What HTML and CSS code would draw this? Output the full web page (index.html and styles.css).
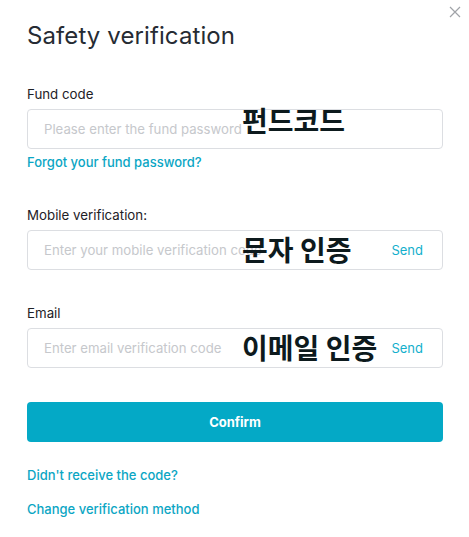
FILE: index.html
```html
<!DOCTYPE html>
<html lang="en">
<head>
<meta charset="utf-8">
<title>Safety verification</title>
<link rel="stylesheet" href="styles.css">
</head>
<body>
<div class="modal">
  <button class="close" aria-label="Close">
    <svg width="12" height="12" viewBox="0 0 12 12"><path d="M1 1L11 11M11 1L1 11" stroke="#a0a3a8" stroke-width="1.2" fill="none"/></svg>
  </button>
  <h1 class="title">Safety verification</h1>

  <div class="label first">Fund code</div>
  <div class="field">
    <input class="input" type="password" placeholder="Please enter the fund password">
    <span class="note note-fund">펀드코드</span>
  </div>
  <a class="link forgot" href="#">Forgot your fund password?</a>

  <div class="label">Mobile verification:</div>
  <div class="field">
    <input class="input" type="text" placeholder="Enter your mobile verification code">
    <span class="note note-mid">문자 인증</span>
    <span class="send">Send</span>
  </div>

  <div class="label">Email</div>
  <div class="field">
    <input class="input" type="text" placeholder="Enter email verification code">
    <span class="note note-mid">이메일 인증</span>
    <span class="send">Send</span>
  </div>

  <button class="confirm">Confirm</button>

  <a class="link bottom-1" href="#">Didn't receive the code?</a>
  <a class="link bottom-2" href="#">Change verification method</a>
</div>
</body>
</html>
```

FILE: styles.css
```css
* { box-sizing: border-box; }
html, body { margin: 0; padding: 0; background: #fff; }
body { font-family: Inter, "Noto Sans", sans-serif; }

.modal {
  position: relative;
  width: 469px;
  height: 537px;
  padding: 20px 26px 0 27px;
  display: flex;
  flex-direction: column;
  align-items: flex-start;
}

.close {
  position: absolute;
  top: 6px;
  right: 8px;
  border: 0;
  background: none;
  padding: 0;
  width: 12px;
  height: 12px;
  display: block;
}
.close svg { display: block; }

.title {
  margin: 0;
  font-size: 24px;
  line-height: 32px;
  font-weight: 400;
  color: #262b33;
  letter-spacing: 0.1px;
}

.label {
  margin-top: 33px;
  font-size: 13.3px;
  line-height: 20px;
  color: #1e2126;
  font-weight: 400;
}
.label.first { margin-top: 32px; }

.field {
  position: relative;
  margin-top: 5px;
  width: 416px;
  height: 40px;
}

.input {
  width: 100%;
  height: 40px;
  border: 1px solid #dcdee2;
  border-radius: 4px;
  padding: 0 16px;
  font-family: Inter, "Noto Sans", sans-serif;
  font-size: 13.2px;
  color: #1e2126;
  outline: none;
  background: #fff;
}
.input::placeholder { color: #c6c8cc; }

.note {
  position: absolute;
  left: 215px;
  font-family: "Noto Sans CJK KR", sans-serif;
  font-weight: 700;
  font-size: 28px;
  line-height: 32px;
  color: #0d1a1d;
  white-space: nowrap;
}
.note-fund { top: -5px; }
.note-mid { top: 3px; }

.send {
  position: absolute;
  right: 20px;
  top: 10px;
  font-size: 13px;
  line-height: 20px;
  color: #14afcc;
}

.link {
  font-size: 13px;
  line-height: 20px;
  color: #0ba6c4;
  text-decoration: none;
  font-weight: 500;
}
.forgot { margin-top: 3px; }

.confirm {
  margin-top: 34px;
  width: 416px;
  height: 40px;
  border: 0;
  border-radius: 4px;
  background: #04a9c6;
  color: #fff;
  font-family: Inter, "Noto Sans", sans-serif;
  font-size: 13px;
  font-weight: 700;
}

.bottom-1 { margin-top: 23px; }
.bottom-2 { margin-top: 14px; }
```
